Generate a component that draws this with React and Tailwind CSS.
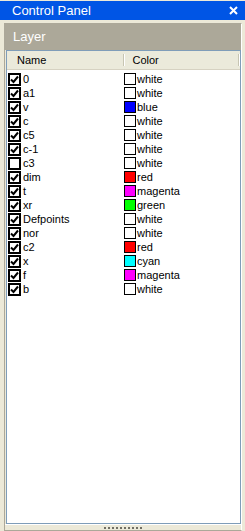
import React from 'react';

const layers = [
    { name: '0', checked: true, color: 'white', swatch: 'bg-white' },
    { name: 'a1', checked: true, color: 'white', swatch: 'bg-white' },
    { name: 'v', checked: true, color: 'blue', swatch: 'bg-[#0000ff]' },
    { name: 'c', checked: true, color: 'white', swatch: 'bg-white' },
    { name: 'c5', checked: true, color: 'white', swatch: 'bg-white' },
    { name: 'c-1', checked: true, color: 'white', swatch: 'bg-white' },
    { name: 'c3', checked: false, color: 'white', swatch: 'bg-white' },
    { name: 'dim', checked: true, color: 'red', swatch: 'bg-[#ff0000]' },
    { name: 't', checked: true, color: 'magenta', swatch: 'bg-[#ff00ff]' },
    { name: 'xr', checked: true, color: 'green', swatch: 'bg-[#00ff00]' },
    { name: 'Defpoints', checked: true, color: 'white', swatch: 'bg-white' },
    { name: 'nor', checked: true, color: 'white', swatch: 'bg-white' },
    { name: 'c2', checked: true, color: 'red', swatch: 'bg-[#ff0000]' },
    { name: 'x', checked: true, color: 'cyan', swatch: 'bg-[#00ffff]' },
    { name: 'f', checked: true, color: 'magenta', swatch: 'bg-[#ff00ff]' },
    { name: 'b', checked: true, color: 'white', swatch: 'bg-white' },
];

const Checkbox = ({ checked }) => (
    <div className="w-[13px] h-[13px] border-2 border-black bg-white flex items-center justify-center shrink-0">
        {checked && (
            <svg width="9" height="9" viewBox="0 0 9 9">
                <path d="M1 4.5 L3.5 7 L8 1.5" fill="none" stroke="black" strokeWidth="2" />
            </svg>
        )}
    </div>
);

const App = () => {
    return (
        <div
            className="w-[245px] h-[531px] bg-[#ece9d8] flex flex-col overflow-hidden text-black"
            style={{ fontFamily: '"Liberation Sans", Arial, sans-serif' }}
        >
            {/* Title bar */}
            <div className="mt-[1px] h-[19px] bg-[#0055e5] flex items-center justify-between pl-[12px] pr-[7px] shrink-0">
                <span className="text-white text-[13px] leading-none">Control Panel</span>
                <svg width="9" height="9" viewBox="0 0 9 9">
                    <path d="M1 1 L8 8 M8 1 L1 8" stroke="white" strokeWidth="2" />
                </svg>
            </div>

            {/* Panel */}
            <div className="mt-[3px] ml-[4px] w-[238px] flex-1 flex flex-col border-t border-l border-b border-[#aca899] border-r border-r-white">
                <div className="h-[26px] bg-[#aca899] flex items-center pl-[8px] shrink-0">
                    <span className="text-white text-[13px]">Layer</span>
                </div>

                {/* List */}
                <div className="ml-[1px] flex-1 border border-[#7f9db9] bg-white flex flex-col">
                    {/* Header */}
                    <div className="h-[19px] bg-[#ebeadb] border-b border-[#d6d2c2] flex items-center text-[11px] shrink-0">
                        <div className="w-[116px] pl-[10px]">Name</div>
                        <div className="w-[2px] h-[12px] border-l border-[#c7c5b2] border-r border-r-white" />
                        <div className="w-[114px] pl-[8px]">Color</div>
                        <div className="w-[2px] h-[12px] border-l border-[#c7c5b2] border-r border-r-white" />
                    </div>

                    {/* Rows */}
                    <div className="pt-[2px] flex flex-col">
                        {layers.map((layer) => (
                            <div key={layer.name} className="h-[14px] flex items-center text-[11px]">
                                <div className="w-[117px] pl-[1px] flex items-center">
                                    <Checkbox checked={layer.checked} />
                                    <span className="pl-[2px] leading-none">{layer.name}</span>
                                </div>
                                <div className="flex items-center">
                                    <div className={`w-[12px] h-[12px] border border-black ${layer.swatch}`} />
                                    <span className="pl-[1px] leading-none">{layer.color}</span>
                                </div>
                            </div>
                        ))}
                    </div>
                </div>

                {/* Gripper */}
                <div className="h-[6px] border-t border-white flex items-center justify-center gap-[2px] shrink-0">
                    {Array.from({ length: 10 }).map((_, i) => (
                        <div key={i} className="w-[2px] h-[2px] bg-[#716f64]" />
                    ))}
                </div>
            </div>
        </div>
    );
};

export default App;
